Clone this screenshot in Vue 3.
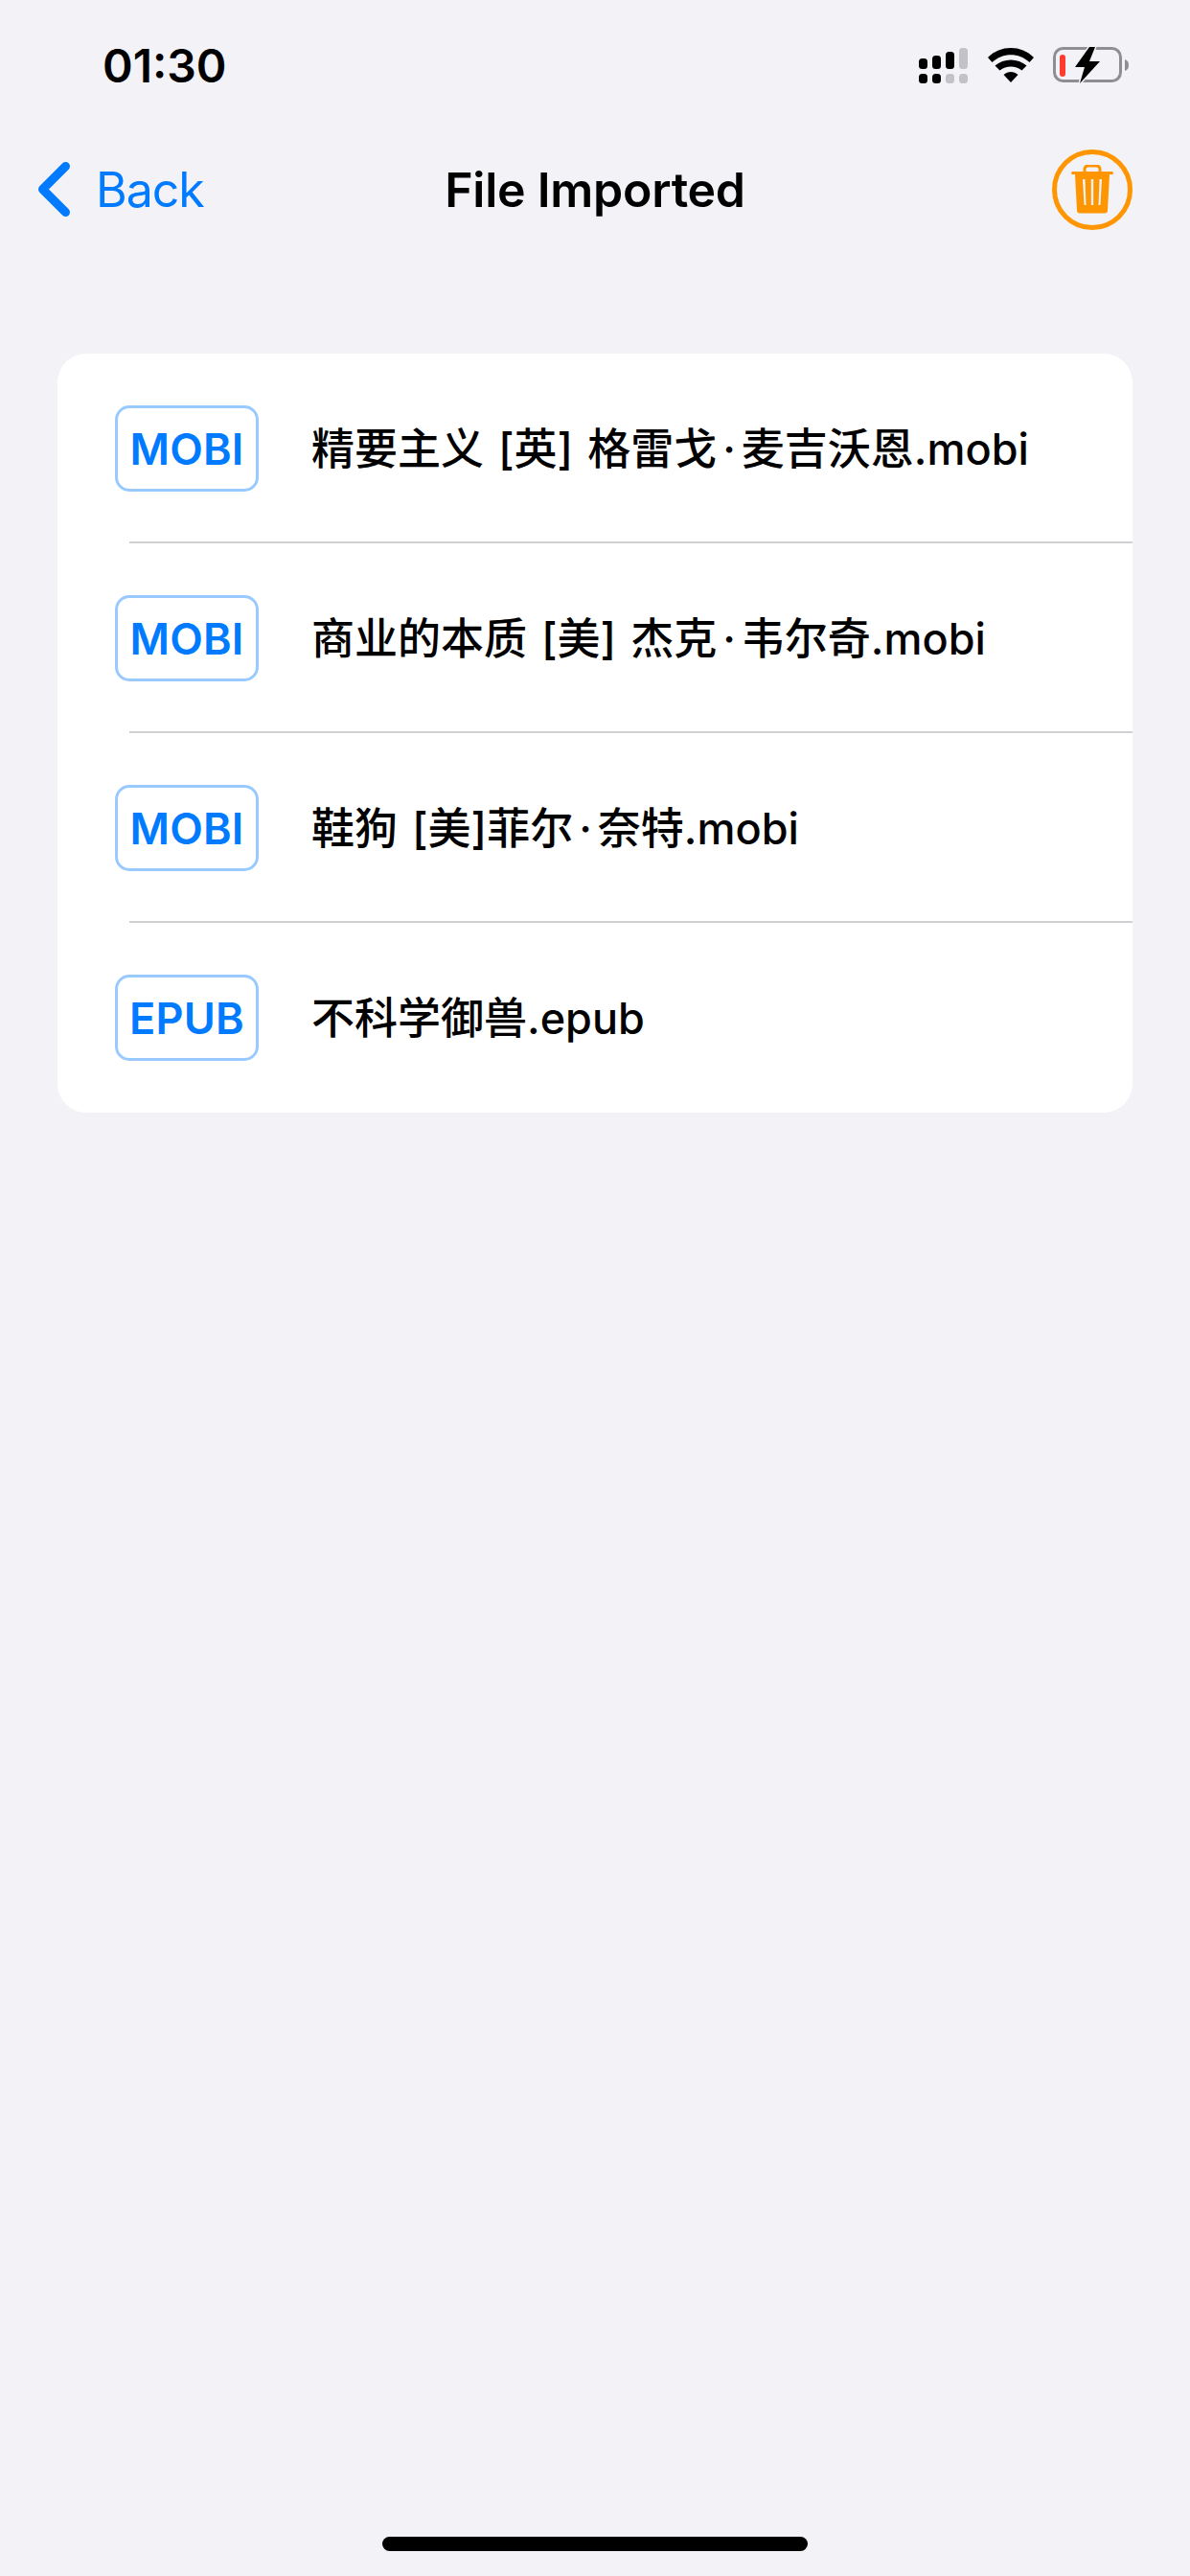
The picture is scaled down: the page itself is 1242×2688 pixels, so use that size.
<template>
  <div class="page">
    <div class="status-bar">
      <span class="time">01:30</span>
      <div class="status-icons">
        <svg class="signal" width="51" height="37" viewBox="0 0 51 37">
          <rect x="0" y="11" width="9" height="11" rx="3.5" fill="#000" />
          <rect x="14" y="8" width="9" height="14" rx="3.5" fill="#000" />
          <rect x="28" y="4" width="9" height="18" rx="3.5" fill="#000" />
          <rect x="42" y="0" width="9" height="22" rx="3.5" fill="#c2c2c7" />
          <rect x="0" y="27" width="9" height="10" rx="3.5" fill="#000" />
          <rect x="14" y="27" width="9" height="10" rx="3.5" fill="#000" />
          <rect x="28" y="27" width="9" height="10" rx="3.5" fill="#c2c2c7" />
          <rect x="42" y="27" width="9" height="10" rx="3.5" fill="#c2c2c7" />
        </svg>
        <svg class="wifi" width="48" height="36" viewBox="0 0 48 36">
          <path d="M24 36 L16.500 28 C21 24 27 24 31.500 28 Z" fill="#000" />
          <path d="M12.500 23.500 L7.500 18.500 C16.500 10.500 31.500 10.500 40.500 18.500 L35.500 23.500 C29 18 19 18 12.500 23.500 Z" fill="#000" />
          <path d="M4.500 15 L0 10 C13 -3.300 35 -3.300 48 10 L43.500 15 C32.500 4.500 15.500 4.500 4.500 15 Z" fill="#000" />
        </svg>
        <svg class="battery" width="80" height="40" viewBox="0 0 80 40">
          <rect x="1.500" y="2.500" width="69" height="34" rx="9" fill="none" stroke="#8e8e93" stroke-width="3" />
          <path d="M75 14 C78 15 79 17 79 20 C79 23 78 25 75 26 Z" fill="#8e8e93" />
          <rect x="7" y="9" width="6" height="23" rx="3" fill="#ff3b30" />
          <path d="M38 1 L23 22 L33 22 L28 39 L49 16 L38 16 L44 1 Z" fill="#000" stroke="#f2f2f7" stroke-width="3" paint-order="stroke" stroke-linejoin="round" />
        </svg>
      </div>
    </div>

    <div class="nav-bar">
      <div class="back">
        <svg width="33" height="57" viewBox="0 0 33 57">
          <path d="M28.500 4.500 L4.500 28.500 L28.500 52.500" fill="none" stroke="#007aff" stroke-width="9" stroke-linecap="round" stroke-linejoin="round" />
        </svg>
        <span>Back</span>
      </div>
      <div class="title">File Imported</div>
      <div class="actions">
        <div class="trash-button">
          <svg width="44" height="51" viewBox="0 0 44 51">
            <path d="M14 7 V5 C14 2.500 15.500 1 18 1 H26 C28.500 1 30 2.500 30 5 V7" fill="none" stroke="#ff9500" stroke-width="3" />
            <rect x="0" y="7" width="44" height="3" rx="1.500" fill="#ff9500" />
            <path fill-rule="evenodd" d="M4 10 H40 L38 47.500 C38 49.500 37 50.500 35 50.500 H9 C7 50.500 6 49.500 6 47.500 Z M12 15 L13.500 42 H15.500 L14.500 15 Z M20.800 15 V42 H23.200 V15 Z M29.500 15 L28.500 42 H30.500 L32 15 Z" fill="#ff9500" />
          </svg>
        </div>
      </div>
    </div>

    <div class="file-list">
      <div v-for="file in files" :key="file.name" class="file-row">
        <div class="badge">{{ file.type }}</div>
        <div class="file-name">
          {{ file.name }}<span v-if="file.rest" class="dot">·</span>{{ file.rest }}
        </div>
      </div>
    </div>

    <div class="home-indicator"></div>
  </div>
</template>

<script setup>
const files = [
  { type: 'MOBI', name: '精要主义 [英] 格雷戈', rest: '麦吉沃恩.mobi' },
  { type: 'MOBI', name: '商业的本质 [美] 杰克', rest: '韦尔奇.mobi' },
  { type: 'MOBI', name: '鞋狗 [美]菲尔', rest: '奈特.mobi' },
  { type: 'EPUB', name: '不科学御兽.epub' }
]
</script>

<style>
html,
body {
  margin: 0;
  background: #f2f2f7;
}
</style>

<style scoped>
.page {
  width: 1242px;
  height: 2688px;
  display: flex;
  flex-direction: column;
  background: #f2f2f7;
  font-family: Inter, "Noto Sans CJK SC", sans-serif;
  color: #000;
  overflow: hidden;
}

.status-bar {
  height: 136px;
  box-sizing: border-box;
  padding: 0 63px 0 107px;
  display: flex;
  align-items: center;
  justify-content: space-between;
}

.time {
  font-size: 48px;
  font-weight: 600;
}

.status-icons {
  display: flex;
  align-items: center;
  gap: 21px;
}

.battery {
  margin-left: -1px;
}

.nav-bar {
  height: 123px;
  box-sizing: border-box;
  padding: 0 60px;
  display: grid;
  grid-template-columns: 1fr auto 1fr;
  align-items: center;
}

.back {
  display: flex;
  align-items: center;
  gap: 27px;
  margin-left: -20px;
  font-size: 50px;
  letter-spacing: -1px;
  color: #007aff;
}

.title {
  font-size: 50px;
  font-weight: 600;
  letter-spacing: -0.25px;
}

.actions {
  display: flex;
  justify-content: flex-end;
}

.trash-button {
  width: 84px;
  height: 84px;
  box-sizing: border-box;
  border: 5px solid #ff9500;
  border-radius: 50%;
  display: flex;
  align-items: center;
  justify-content: center;
}

.file-list {
  margin: 110px 60px 0;
  background: #fff;
  border-radius: 30px;
  overflow: hidden;
}

.file-row {
  height: 198px;
  box-sizing: border-box;
  padding-left: 60px;
  display: flex;
  align-items: center;
  gap: 55px;
  position: relative;
}

.file-row:not(:last-child)::after {
  content: "";
  position: absolute;
  left: 75px;
  right: 0;
  bottom: 0;
  height: 2px;
  background: #d1d1d3;
}

.badge {
  width: 150px;
  height: 90px;
  box-sizing: border-box;
  border: 3px solid #99caff;
  border-radius: 15px;
  display: flex;
  align-items: center;
  justify-content: center;
  font-size: 45px;
  font-weight: 600;
  letter-spacing: 0.2px;
  color: #007aff;
}

.file-name {
  padding-bottom: 6px;
  font-size: 45px;
  font-weight: 500;
  word-spacing: 3px;
}

.dot {
  padding: 0 6px;
}

.home-indicator {
  width: 444px;
  height: 15px;
  margin: auto auto 26px;
  border-radius: 8px;
  background: #000;
}
</style>
